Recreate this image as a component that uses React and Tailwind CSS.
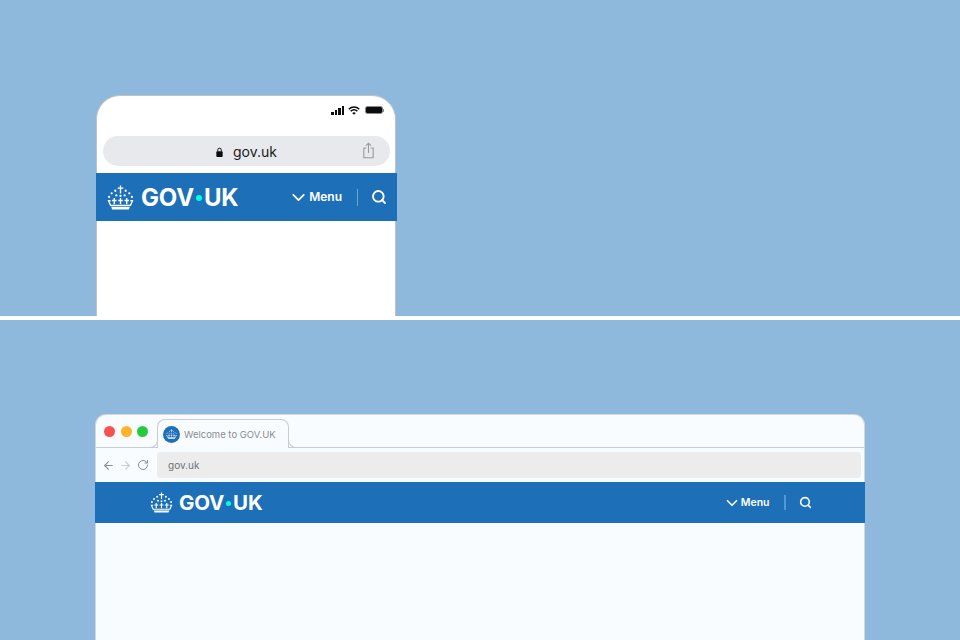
import React from 'react';
import { ChevronDown, Search, ArrowLeft, ArrowRight, RotateCw } from 'lucide-react';

const Crown = ({ className }) => (
  <svg viewBox="0 0 52 48" className={className} fill="#fff">
    {/* cross */}
    <path d="M24.700 1h2.600v3.600h4.200v2.600h-4.200v9h-2.600v-9h-4.200V4.600h4.200z" />
    {/* arc of dots */}
    <circle cx="16" cy="11" r="2.200" />
    <circle cx="36" cy="11" r="2.200" />
    <circle cx="9" cy="16" r="2.200" />
    <circle cx="43" cy="16" r="2.200" />
    <circle cx="4" cy="23" r="2.200" />
    <circle cx="48" cy="23" r="2.200" />
    <circle cx="18" cy="20" r="2.200" />
    <circle cx="34" cy="20" r="2.200" />
    <circle cx="26" cy="21" r="2.200" />
    {/* band with small crosses */}
    <path d="M12.700 25h2.600v3.500h3v2.500h-3v6h-2.600v-6h-3v-2.500h3zM24.700 25h2.600v3.500h3v2.500h-3v6h-2.600v-6h-3v-2.500h3zM36.700 25h2.600v3.500h3v2.500h-3v6h-2.600v-6h-3v-2.500h3z" />
    <path d="M1 29h6v2.500H4.500L8 38h36l3.500-6.500H45V29h6l-5 11.500H6z" />
    <path d="M8 42h36l-2 5H10z" />
  </svg>
);

const Wordmark = ({ text, dot, gap }) => (
  <span className={`flex items-center font-['Inter',sans-serif] font-bold text-white ${text}`}>
    GOV
    <span className={`rounded-full bg-[#00ffe0] ${dot} ${gap}`} />
    UK
  </span>
);

const Wifi = () => (
  <svg viewBox="0 0 16 12" className="h-[9px] w-[12px]" fill="none" stroke="#0b0c0c" strokeWidth="2">
    <path d="M1 4.300a10 10 0 0 1 14 0" />
    <path d="M3.500 7a6.400 6.400 0 0 1 9 0" />
    <path d="M8 11.800 5.600 9.400a3.400 3.400 0 0 1 4.800 0z" fill="#0b0c0c" stroke="none" />
  </svg>
);

const Share = () => (
  <svg viewBox="0 0 14 20" className="h-[17px] w-[13px]" fill="none" stroke="#9a9ba0" strokeWidth="1.300">
    <path d="M4.500 7H1.500v11.500h11V7H9.500" />
    <path d="M7 13V1.500M4 4.300 7 1.500l3 2.800" />
  </svg>
);

const Lock = () => (
  <svg viewBox="0 0 10 14" className="h-[10px] w-[7px]">
    <path d="M2.500 6V4a2.500 2.500 0 0 1 5 0V6" fill="none" stroke="#0b0c0c" strokeWidth="1.400" />
    <rect x="0.500" y="6" width="9" height="8" rx="1.200" fill="#0b0c0c" />
  </svg>
);

const Phone = () => (
  <div className="flex h-[221px] w-[300px] flex-col rounded-t-[24px] border border-b-0 border-[#bfc3c9] bg-white">
    <div className="flex h-[40px] shrink-0 items-end justify-end gap-[5px] pb-[21px] pr-[11px]">
      <div className="-mr-px flex items-end gap-[1px]">
        <span className="h-[3px] w-[2.500px] bg-[#0b0c0c]" />
        <span className="h-[5px] w-[2.500px] bg-[#0b0c0c]" />
        <span className="h-[7px] w-[2.500px] bg-[#0b0c0c]" />
        <span className="h-[9px] w-[2.500px] bg-[#0b0c0c]" />
      </div>
      <Wifi />
      <div className="mb-[1px] flex items-center">
        <div className="h-[8px] w-[18px] rounded-[2.500px] border border-[#8a8a8a] bg-[#0b0c0c]" />
        <div className="h-[3px] w-[1px] bg-[#8a8a8a]" />
      </div>
    </div>
    <div className="relative mx-[6px] flex h-[30px] w-[287px] shrink-0 items-center justify-center gap-[10px] rounded-full bg-[#e8e9ed] pt-[1px] font-['Inter',sans-serif] text-[14px] text-[#1a1a1a]">
      <Lock />
      <span>gov.uk</span>
      <div className="absolute right-[15px] top-[6px]">
        <Share />
      </div>
    </div>
    <div className="-ml-px mt-[7px] flex h-[48px] w-[301px] shrink-0 items-center bg-[#1d70b8] pl-[11px]">
      <Crown className="h-[25px] w-[27px]" />
      <div className="ml-[7px] pt-[1px]">
        <Wordmark text="text-[24px] tracking-[-0.2px]" dot="h-[6px] w-[6px]" gap="mx-[2px]" />
      </div>
      <div className="ml-auto flex items-center pr-[10px]">
        <ChevronDown size={21} strokeWidth={2} className="text-white" />
        <span className="font-['Inter',sans-serif] text-[12px] font-semibold text-white">Menu</span>
        <span className="ml-[15px] h-[17px] w-px bg-[#6ea3d2]" />
        <Search size={16} strokeWidth={2.800} className="ml-[13px] text-white" />
      </div>
    </div>
  </div>
);

const Browser = () => (
  <div className="flex h-[226px] w-[770px] flex-col rounded-t-[11px] border border-b-0 border-[#d3d8dd] bg-[#f8fcff]">
    <div className="flex h-[33px] shrink-0 items-end border-b border-[#c8cdd2]">
      <div className="mb-[10px] ml-[8px] flex gap-[5.500px]">
        <span className="h-[11px] w-[11px] rounded-full bg-[#fb4f4f]" />
        <span className="h-[11px] w-[11px] rounded-full bg-[#fdb32a]" />
        <span className="h-[11px] w-[11px] rounded-full bg-[#27c93f]" />
      </div>
      <div className="relative -mb-px ml-[9px] flex h-[29px] w-[132px] items-center rounded-t-[8px] border border-b-0 border-[#c8cdd2] bg-[#f8fcff] pl-[5px]">
        <div className="flex h-[17px] w-[17px] items-center justify-center rounded-full bg-[#1d70b8]">
          <Crown className="h-[10px] w-[11px]" />
        </div>
        <span className="ml-[4px] pt-[3px] font-['Inter',sans-serif] text-[9.500px] text-[#8a8d91]">Welcome to GOV.UK</span>
        <span className="absolute -left-[8px] bottom-0 h-[8px] w-[8px] rounded-br-[8px] border-b border-r border-[#c8cdd2]" />
        <span className="absolute -right-[8px] bottom-0 h-[8px] w-[8px] rounded-bl-[8px] border-b border-l border-[#c8cdd2]" />
      </div>
    </div>
    <div className="flex h-[34px] shrink-0 items-center pl-[6px]">
      <ArrowLeft size={13} className="text-[#8b8e92]" />
      <ArrowRight size={13} className="ml-[4px] text-[#c9cccf]" />
      <RotateCw size={12} className="ml-[5px] text-[#8b8e92]" />
      <div className="ml-[8px] flex h-[26px] w-[704px] items-center rounded-[4px] bg-[#ececec] pl-[11px] font-['Inter',sans-serif] text-[10px] text-[#6f7276]">
        gov.uk
      </div>
    </div>
    <div className="-mx-px flex h-[41px] shrink-0 items-center bg-[#1d70b8] pl-[55px]">
      <Crown className="h-[21px] w-[23px]" />
      <div className="ml-[6px] pt-[1px]">
        <Wordmark text="text-[20.500px] tracking-[-0.2px]" dot="h-[5px] w-[5px]" gap="mx-[2px]" />
      </div>
      <div className="ml-auto flex items-center pr-[53.500px]">
        <ChevronDown size={18} strokeWidth={2.200} className="text-white" />
        <span className="font-['Inter',sans-serif] text-[10.500px] font-semibold text-white">Menu</span>
        <span className="ml-[14.500px] h-[15px] w-[1.500px] bg-[#5a95cb]" />
        <Search size={13} strokeWidth={2.800} className="ml-[13px] text-white" />
      </div>
    </div>
  </div>
);

const App = () => (
  <div className="flex h-[640px] w-[960px] flex-col overflow-hidden bg-white">
    <div className="flex h-[316px] items-end bg-[#8eb9dc] pl-[96px]">
      <Phone />
    </div>
    <div className="mt-[4px] flex h-[320px] items-end bg-[#8eb9dc] pl-[95px]">
      <Browser />
    </div>
  </div>
);

export default App;
